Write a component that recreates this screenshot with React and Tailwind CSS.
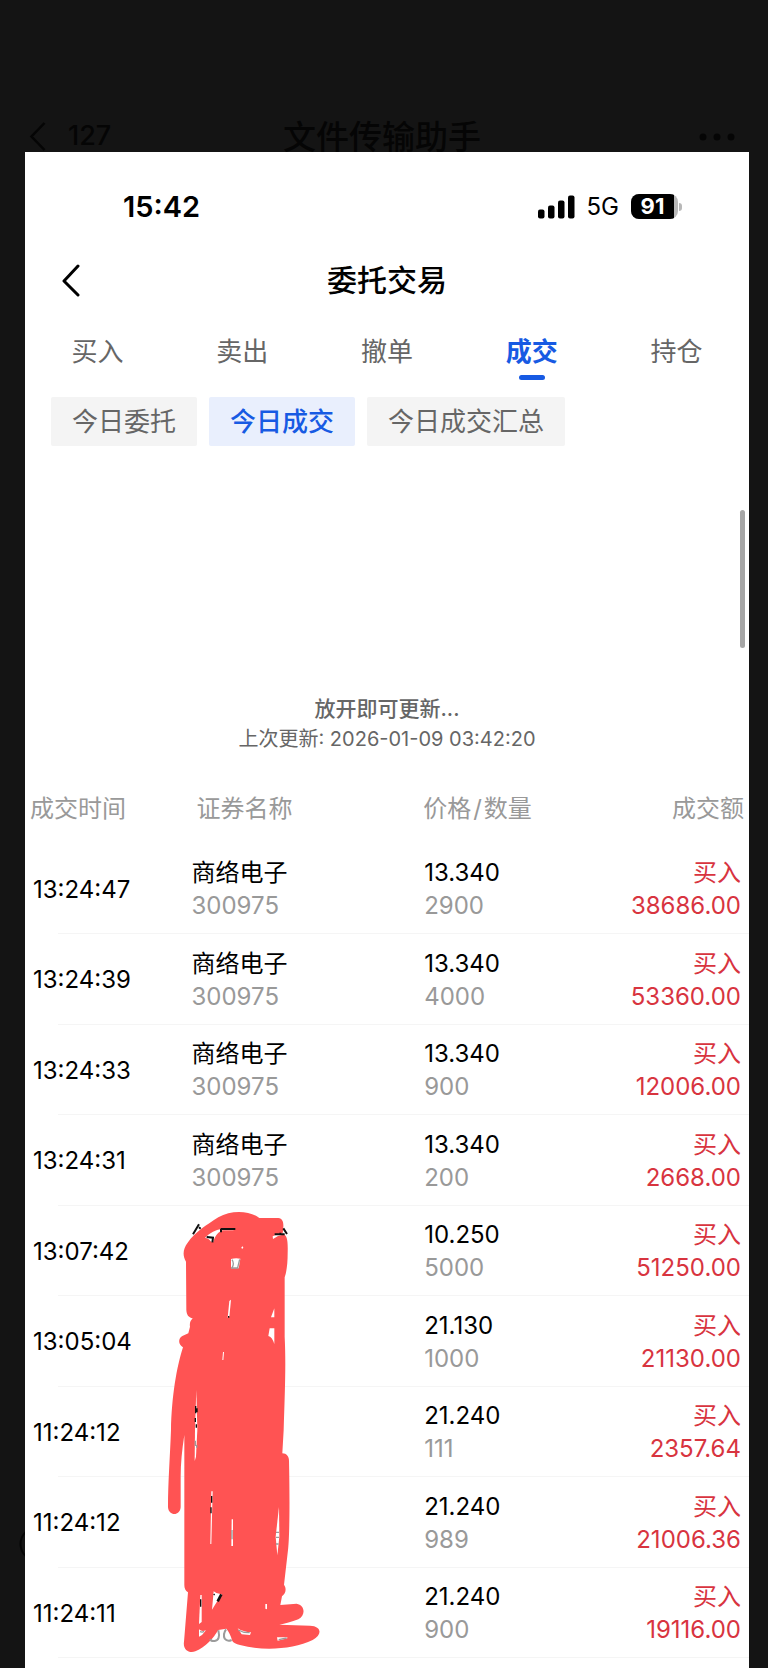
const tabs = ['买入', '卖出', '撤单', '成交', '持仓'];
const filters = ['今日委托', '今日成交', '今日成交汇总'];

const trades = [
  { time: '13:24:47', name: '商络电子', code: '300975', price: '13.340', qty: '2900', amount: '38686.00' },
  { time: '13:24:39', name: '商络电子', code: '300975', price: '13.340', qty: '4000', amount: '53360.00' },
  { time: '13:24:33', name: '商络电子', code: '300975', price: '13.340', qty: '900', amount: '12006.00' },
  { time: '13:24:31', name: '商络电子', code: '300975', price: '13.340', qty: '200', amount: '2668.00' },
  { time: '13:07:42', price: '10.250', qty: '5000', amount: '51250.00' },
  { time: '13:05:04', price: '21.130', qty: '1000', amount: '21130.00' },
  { time: '11:24:12', price: '21.240', qty: '111', amount: '2357.64' },
  { time: '11:24:12', price: '21.240', qty: '989', amount: '21006.36' },
  { time: '11:24:11', price: '21.240', qty: '900', amount: '19116.00' },
];

function ChatHeader() {
  return (
    <header className="grid h-[152px] grid-cols-[1fr_auto_1fr] items-end pr-[33px] pl-[29px] text-[#050505]">
      <button className="flex h-[31px] items-center gap-[22px] text-[27px] font-medium" aria-label="返回 127">
        <svg className="h-[29px] w-[17px]" viewBox="0 0 17 29" fill="none" stroke="currentColor" strokeWidth="2.5">
          <path d="M15.500 1 2.500 14.500l13 13.500" />
        </svg>
        <span>127</span>
      </button>
      <h2 className="h-[31px] text-[33px] leading-[33px] font-medium">文件传输助手</h2>
      <button className="flex h-[31px] items-center justify-end" aria-label="更多">
        <svg className="h-2 w-9" viewBox="0 0 36 8" fill="currentColor">
          <circle cx="4" cy="4" r="3.500" />
          <circle cx="18" cy="4" r="3.500" />
          <circle cx="32" cy="4" r="3.500" />
        </svg>
      </button>
    </header>
  );
}

function StatusBar() {
  return (
    <div className="flex h-[109px] items-center justify-between pr-[67px] pl-[98px]">
      <span className="text-[29px] font-semibold">15:42</span>
      <div className="flex items-center gap-3">
        <svg className="h-6 w-[37px]" viewBox="0 0 37 24" aria-hidden="true">
          <rect x="0" y="14.500" width="6.500" height="9" rx="2" />
          <rect x="10" y="10.500" width="6.500" height="13" rx="2" />
          <rect x="20" y="5.500" width="6.500" height="18" rx="2" />
          <rect x="30" y="0.500" width="6.500" height="23" rx="2" />
        </svg>
        <span className="text-[24px]">5G</span>
        <div className="flex items-center gap-px">
          <div className="flex h-[25px] w-[47px] overflow-hidden rounded-lg bg-[#b8b8b8]">
            <span className="flex w-[43px] items-center justify-center bg-black text-[22px] font-bold text-white">91</span>
          </div>
          <span className="h-2 w-[3px] rounded-r-full bg-[#b8b8b8]" />
        </div>
      </div>
    </div>
  );
}

function Scribble() {
  return (
    <svg className="absolute top-[1038px] left-[125px] h-[479px] w-[200px]" viewBox="0 0 600 1437" aria-hidden="true">
      <path
        fill="#ff5353"
        d="M108 215C96 195 100 175 113 158C135 126 170 105 205 82C245 58 300 62 328 84H385C402 86 402 105 398 130C412 138 414 150 413 190C413 220 410 245 404 262V440C408 520 405 600 401 720L397 790C410 790 417 800 417 812C420 950 418 1050 414 1080L402 1184C410 1195 408 1210 396 1219L391 1245L440 1241C465 1245 468 1275 445 1288C425 1296 405 1301 388 1304L480 1307C515 1308 518 1335 488 1350C430 1378 340 1384 270 1365C258 1362 250 1358 247 1353C242 1335 236 1325 229 1316L205 1320C190 1345 168 1370 136 1384C118 1391 98 1380 102 1355L114 1207C106 1202 103 1195 103 1185V735C96 780 92 820 92 860V952C90 979 56 979 54 952C54 880 60 800 63 720C65 620 80 530 99 472C84 464 84 445 97 438L115 430L120 410C118 398 122 392 128 385C115 382 110 375 109 360Z"
      />
      <g fill="#fff">
        <path d="M165 143C180 128 198 120 213 117H256L250 121H218C206 126 196 135 190 155L184 156C178 148 173 144 165 143Z" />
        <path d="M368 139L390 130H410L399 134L384 138L369 147Z" />
        <path d="M274 172l4-3 2 4-4 4Z" />
        <path d="M243 207Q257 203 271 206L266 235H243Z" />
        <path d="M238 333L243 329L238 380L233 383Z" />
        <path d="M373 355V382H363Z" />
        <path d="M359 415H373V462Q366 440 355 438Z" />
        <path d="M219 486H222L220 510H217Z" />
        <path d="M139 600L142 720L138 800L134 813L135 720Z" />
        <path d="M184 904H188L186 980L184 1062H181Z" />
        <path d="M245 988H249V1068H244Z" />
        <path d="M387 950L388 1040L382 1096L377 1040Z" />
        <path d="M151 1215H155V1296L147 1302Z" />
        <path d="M191 1204Q202 1214 216 1212Q200 1236 186 1259Z" />
        <path d="M346 1242H351V1258L346 1256Z" />
        <path d="M147 1318Q155 1326 168 1321L156 1335L147 1340Z" />
        <path d="M263 1315Q280 1326 303 1327L300 1335L275 1333Z" />
        <path d="M381 1342H412V1345L383 1352Z" />
      </g>
      <g fill="none" stroke="#111" strokeWidth="6">
        <path d="M147 103L129 133M147 112l5 4M212 117H256M213 117v10M170 141l19 2-2 14M400 115l11 17M374 133h30M391 128v8" />
        <path strokeWidth="4" d="M236 378v5M137 648v22M141 655v12M136 684v12M139 703v10M185 918v20M183 952v18M152 1228v22M191 1212l3 3" />
        <path strokeWidth="8" d="M214 1213L203 1234" />
      </g>
      <g fill="none" stroke="#9b9b9b" strokeWidth="4">
        <path d="M246 209Q254 221 246 233M269 208L263 233M243 234h22M136 752v16M140 765v8M246 1020v28M378 1027h9M378 1042h9M378 1062h8M265 1320q15 9 34 8M386 1349l24-5M150 1325q8 3 12-1" />
        <path strokeWidth="6" d="M205 1321Q212 1350 194 1353Q182 1354 181 1347M228 1318Q218 1333 224 1346Q232 1356 245 1350" />
      </g>
    </svg>
  );
}

export default function App() {
  return (
    <div className="relative overflow-hidden bg-[#141414] font-['Inter','Noto_Sans_CJK_SC',sans-serif] text-black">
      <ChatHeader />
      <svg className="absolute top-[1526px] left-[19px] h-9 w-9" viewBox="0 0 36 36" fill="none" stroke="#050505" strokeWidth="2" aria-hidden="true">
        <circle cx="18" cy="18" r="16.500" />
      </svg>
      <main className="relative mr-[19px] ml-[25px] bg-white pb-[10px]">
        <StatusBar />
        <div className="grid h-[38px] grid-cols-[1fr_auto_1fr] items-center px-9">
          <button className="h-[34px] w-5" aria-label="返回">
            <svg className="h-[34px] w-5" viewBox="0 0 20 34" fill="none" stroke="#000" strokeWidth="3" strokeLinecap="round" strokeLinejoin="round">
              <path d="M17 3 3 18l14 14" />
            </svg>
          </button>
          <h1 className="text-[30px] leading-[38px] font-medium">委托交易</h1>
        </div>
        <nav className="mt-[34px] flex h-[48px]">
          {tabs.map((tab) => (
            <button
              key={tab}
              className={
                tab === '成交'
                  ? 'flex flex-1 flex-col items-center gap-[5px] text-[26px] leading-[37px] font-bold text-[#175ae3]'
                  : 'flex flex-1 flex-col items-center text-[26px] leading-[37px] text-[#666]'
              }
            >
              {tab}
              {tab === '成交' && <span className="h-[5px] w-[26px] rounded-full bg-[#175ae3]" />}
            </button>
          ))}
        </nav>
        <div className="mt-4 flex gap-3 pl-[26px]">
          {filters.map((filter) => (
            <button
              key={filter}
              className={
                filter === '今日成交'
                  ? 'h-[49px] rounded-xs bg-[#e9effd] px-[21px] text-[26px] leading-[49px] font-medium text-[#175ae3]'
                  : 'h-[49px] rounded-xs bg-[#f4f4f4] px-[21px] text-[26px] leading-[49px] text-[#666]'
              }
            >
              {filter}
            </button>
          ))}
        </div>
        <div className="mt-16 flex h-[138px] justify-end pr-1">
          <div className="w-[5px] rounded-full bg-[#a6a6a6]" />
        </div>
        <div className="mt-[46px] flex flex-col items-center text-[#666]">
          <p className="text-[21px] leading-[30px] font-medium">放开即可更新...</p>
          <p className="text-[20px] leading-[30px]">上次更新: 2026-01-09 03:42:20</p>
        </div>
        <table className="mt-[18px] w-full table-fixed text-[24px] leading-[33px]">
          <thead>
            <tr className="h-[72px] text-left text-[#999]">
              <th className="w-[23%] pl-[5px] font-normal">成交时间</th>
              <th className="w-[32%] pl-[5px] font-normal">证券名称</th>
              <th className="w-[24%] font-normal">
                价格<span className="mx-[2px]">/</span>数量
              </th>
              <th className="w-[21%] pr-[5px] text-right font-normal">成交额</th>
            </tr>
          </thead>
          <tbody>
            {trades.map((trade, i) => (
              <tr
                key={i}
                className="relative odd:h-[90px] even:h-[91px] after:absolute after:right-0 after:bottom-0 after:left-[33px] after:h-px after:bg-[#f5f5f5]"
              >
                <td className="pl-2">{trade.time}</td>
                <td>
                  <div>{trade.name}</div>
                  <div className="text-[#999]">{trade.code}</div>
                </td>
                <td className="pl-px">
                  <div>{trade.price}</div>
                  <div className="text-[#999]">{trade.qty}</div>
                </td>
                <td className="pr-2 text-right text-[#d8343f]">
                  <div>买入</div>
                  <div>{trade.amount}</div>
                </td>
              </tr>
            ))}
          </tbody>
        </table>
        <Scribble />
      </main>
    </div>
  );
}
